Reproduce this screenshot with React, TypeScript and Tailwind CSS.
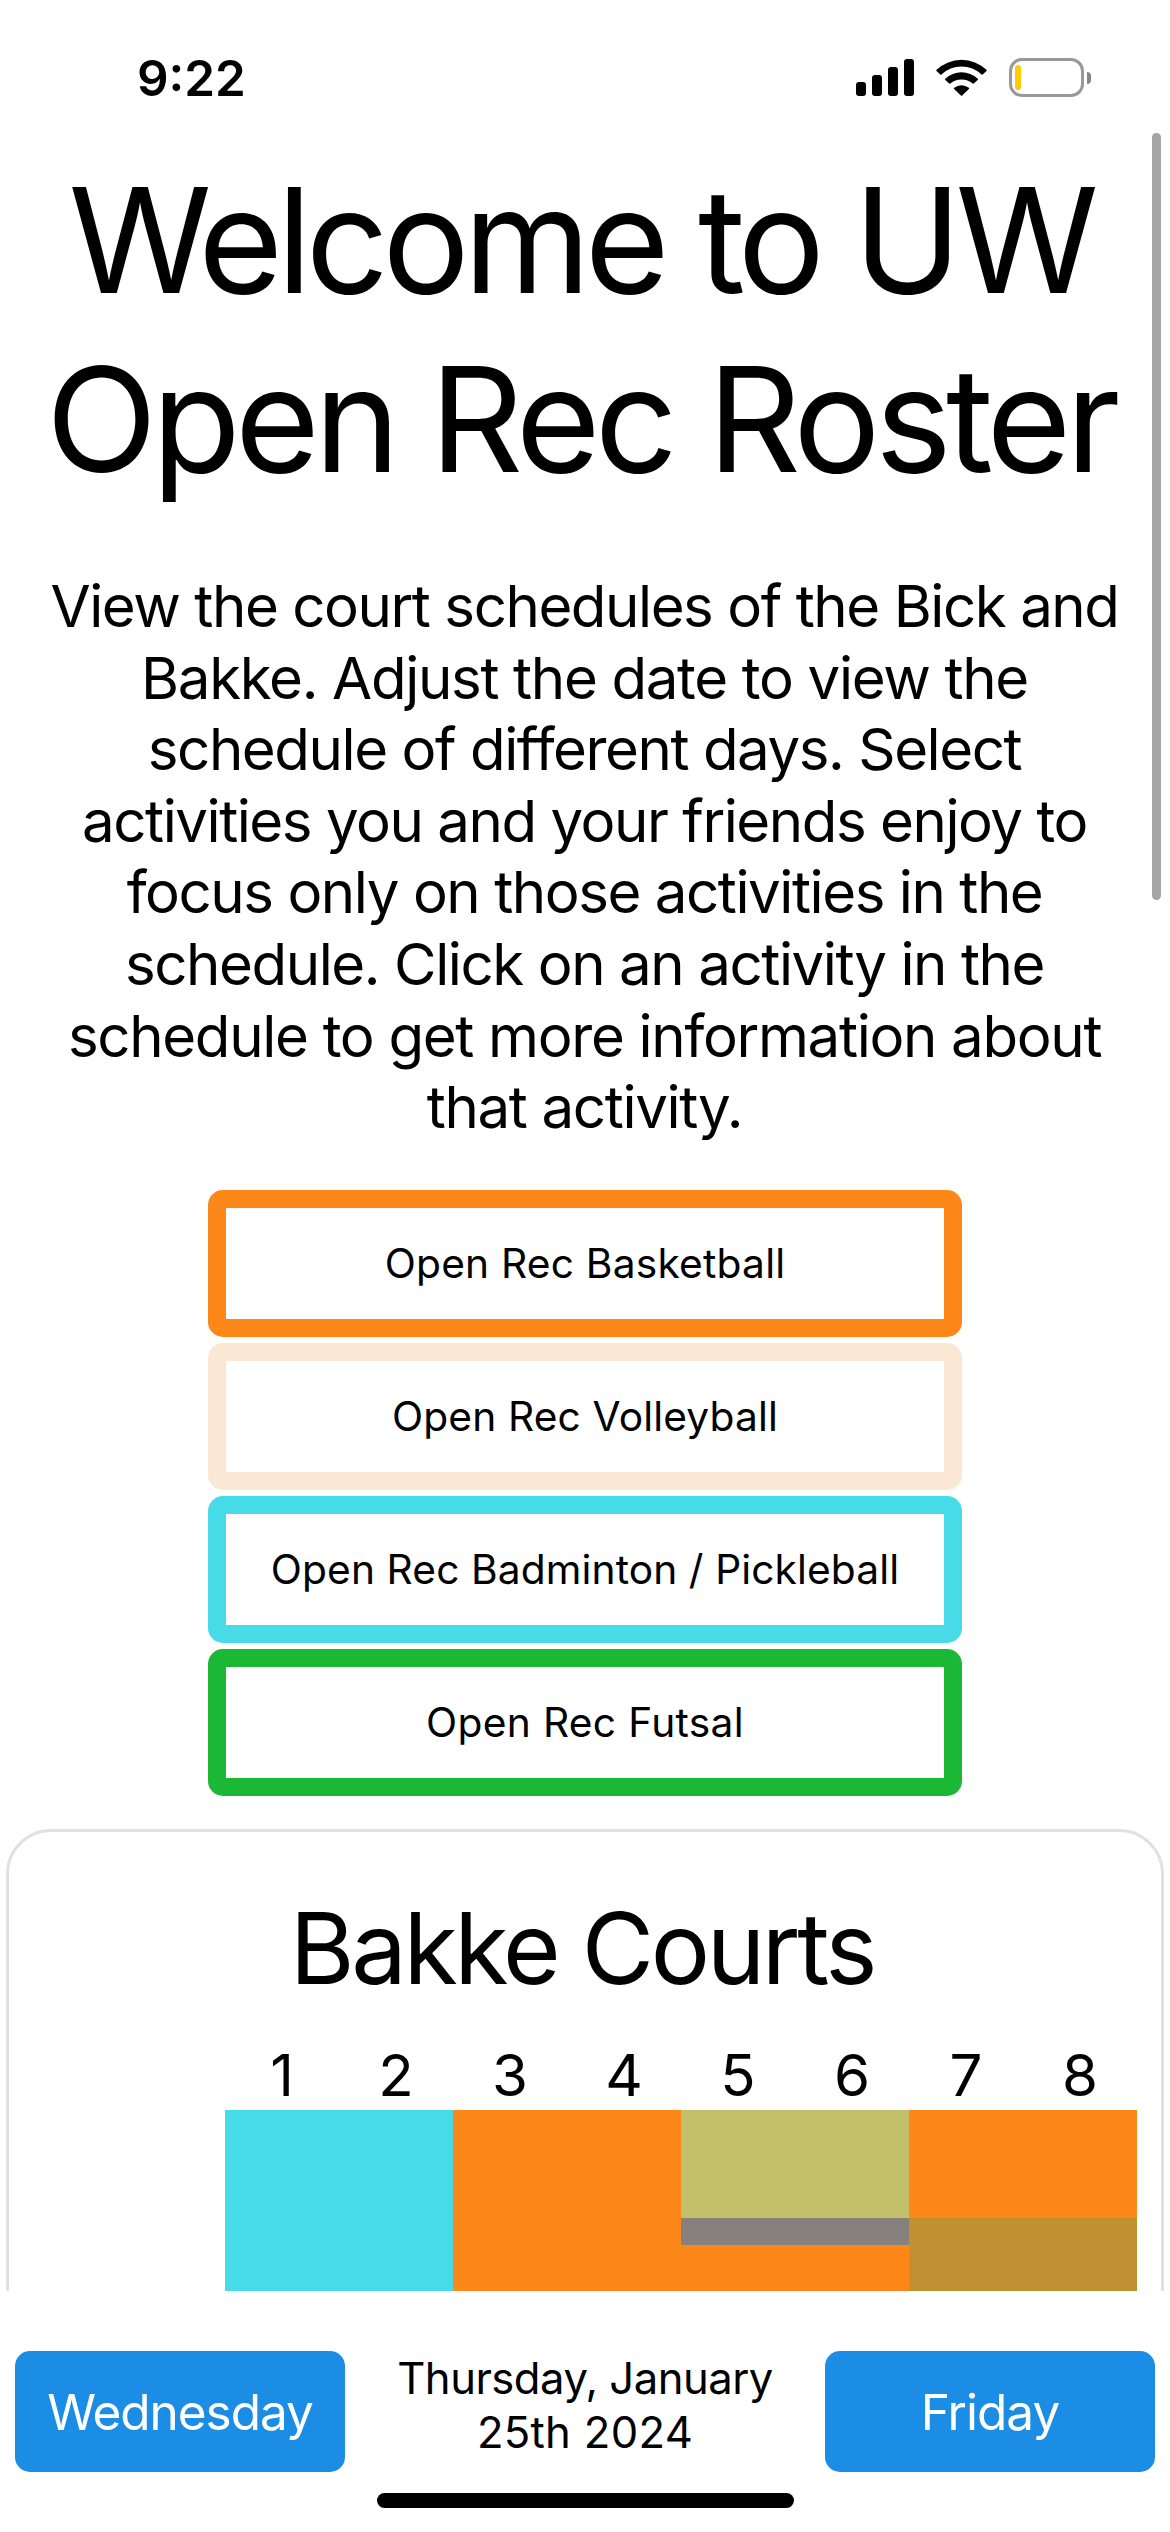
import React from "react";

const introLines = [
  { text: "View the court schedules of the Bick and", className: "tracking-[-1.448px]" },
  { text: "Bakke. Adjust the date to view the", className: "tracking-[-1.338px]" },
  { text: "schedule of different days. Select", className: "tracking-[-1.445px]" },
  { text: "activities you and your friends enjoy to", className: "tracking-[-1.464px]" },
  { text: "focus only on those activities in the", className: "tracking-[-1.45px]" },
  { text: "schedule. Click on an activity in the", className: "tracking-[-1.43px]" },
  { text: "schedule to get more information about", className: "tracking-[-1.325px]" },
  { text: "that activity.", className: "tracking-[-1.35px]" },
];

const activities = [
  { name: "Open Rec Basketball", className: "border-[#fd8719] tracking-[0.215px]" },
  { name: "Open Rec Volleyball", className: "border-[#fae7d4] tracking-[0.153px]" },
  { name: "Open Rec Badminton / Pickleball", className: "border-[#47dbe8] tracking-[0.112px]" },
  { name: "Open Rec Futsal", className: "border-[#1bb836] tracking-[0.324px]" },
];

const courts = [1, 2, 3, 4, 5, 6, 7, 8];

function StatusBar() {
  return (
    <header className="flex h-[132px] shrink-0 items-start justify-between pl-[137px] pr-[79px]">
      <span className="mt-12 text-[49.4px] font-semibold leading-[60px]">9:22</span>
      <div className="mt-[58px] flex items-start">
        <div className="mt-px flex h-[37px] items-end gap-1.5">
          <i className="h-[14px] w-[10px] rounded-[3px] bg-black" />
          <i className="h-[21px] w-[10px] rounded-[3px] bg-black" />
          <i className="h-[29px] w-[10px] rounded-[3px] bg-black" />
          <i className="h-[37px] w-[10px] rounded-[3px] bg-black" />
        </div>
        <svg className="ml-[22px] mt-px h-[37px] w-[51px]" viewBox="0 0 50.6 37">
          <path d="M.3 11.9Q-.2 11.3.4 10.8A36 36 0 0 1 50.2 10.8Q50.8 11.3 50.3 11.9L46.5 15.5Q45.9 16 45.4 15.5A29 29 0 0 0 5.2 15.5Q4.7 16 4.1 15.5Z" />
          <path d="M8.9 20.8Q8.4 20.2 9 19.7A24 24 0 0 1 41.6 19.7Q42.2 20.2 41.7 20.8L37.6 24.6Q37 25 36.5 24.6A17 17 0 0 0 14.1 24.6Q13.6 25 13 24.6Z" />
          <path d="M17.9 29.9Q17.4 29.3 18 28.8A11.5 11.5 0 0 1 32.6 28.8Q33.2 29.3 32.7 29.9L25.9 36.6Q25.3 37.1 24.7 36.6Z" />
        </svg>
        <div className="ml-[22px] flex items-center">
          <div className="h-[39px] w-[75px] rounded-[13px] border-[3px] border-[#999] pl-[3px] pt-1">
            <div className="h-[25px] w-1.5 rounded-[3px] bg-[#ffcc00]" />
          </div>
          <i className="ml-[3px] h-[12px] w-1 rounded-r-full bg-[#858585]" />
        </div>
      </div>
    </header>
  );
}

function Schedule() {
  return (
    <section className="mx-1.5 mt-[33px] h-[700px] shrink-0 rounded-[45px] border-[3px] border-[#dee2e6] pt-[56px]">
      <h2 className="pr-[6px] text-center text-[99px] leading-[120px] tracking-[-3.4px]">Bakke Courts</h2>
      <div className="ml-[216px] mr-6 mt-[31px]">
        <div className="grid h-[71px] grid-cols-8 text-center text-[58.2px] leading-[72px]">
          {courts.map((court) => (
            <span key={court}>{court}</span>
          ))}
        </div>
        <div className="grid h-[300px] grid-cols-4">
          <div className="bg-[#47dbe8]" />
          <div className="bg-[#fd8719]" />
          <div className="flex flex-col bg-[#fd8719]">
            <div className="h-[108px] bg-[#c4bf6b]" />
            <div className="h-[27px] bg-[#87817d]" />
          </div>
          <div className="flex flex-col bg-[#fd8719]">
            <div className="mt-[108px] grow bg-[#bf9133]" />
          </div>
        </div>
      </div>
    </section>
  );
}

function DateBar() {
  return (
    <footer className="flex h-[241px] shrink-0 flex-col items-center bg-white pt-[60px]">
      <div className="flex h-[121px] w-full items-start justify-between px-[15px]">
        <button className="h-[121px] w-[330px] rounded-[15px] bg-[#1b8de4] pt-0.5 text-[49.5px] tracking-[-1.05px] text-white">
          Wednesday
        </button>
        <p className="mt-px whitespace-nowrap text-center text-[43.6px] leading-[54px]">
          <span className="block tracking-[-0.5px]">Thursday, January</span>
          <span className="block tracking-[0.3px]">25th 2024</span>
        </p>
        <button className="h-[121px] w-[330px] rounded-[15px] bg-[#1b8de4] pt-0.5 text-[49.5px] tracking-[-0.97px] text-white">
          Friday
        </button>
      </div>
      <div className="mt-[21px] h-[15px] w-[417px] rounded-full bg-black" />
    </footer>
  );
}

export default function App() {
  return (
    <div className="relative flex h-[2532px] w-[1170px] flex-col overflow-hidden bg-white font-['Inter',sans-serif] text-black">
      <StatusBar />
      <main className="flex h-[2159px] shrink-0 flex-col overflow-hidden">
        <h1 className="mt-[19px] h-[358px] shrink-0 whitespace-nowrap pr-[9px] text-center text-[145.4px] leading-[179px]">
          <span className="block tracking-[-6.2px]">Welcome to UW</span>
          <span className="block tracking-[-5.6px]">Open Rec Roster</span>
        </h1>
        <p className="mt-[62px] h-[573px] shrink-0 whitespace-nowrap pr-px text-center text-[58.2px] leading-[71.6px]">
          {introLines.map((line) => (
            <span key={line.text} className={`block ${line.className}`}>
              {line.text}
            </span>
          ))}
        </p>
        <div className="mx-auto mt-[46px] flex w-[754px] shrink-0 flex-col gap-1.5">
          {activities.map((activity) => (
            <button
              key={activity.name}
              className={`h-[147px] rounded-[15px] border-[18px] text-[40.7px] ${activity.className}`}
            >
              {activity.name}
            </button>
          ))}
        </div>
        <Schedule />
      </main>
      <DateBar />
      <div className="absolute left-[1152px] top-[133px] h-[767px] w-[9px] rounded-full bg-[#a5a5a5]" />
    </div>
  );
}
